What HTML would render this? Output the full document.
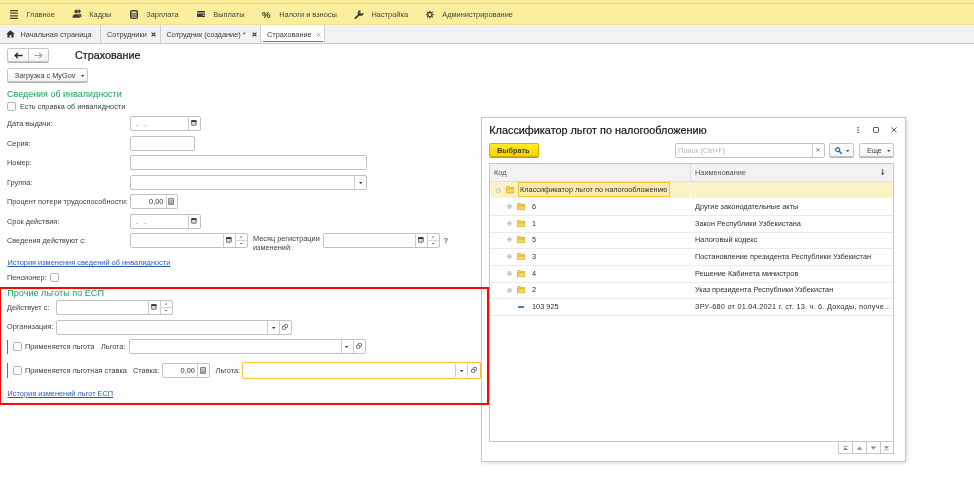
<!DOCTYPE html>
<html><head><meta charset="utf-8">
<style>
*{box-sizing:border-box;margin:0;padding:0}
html,body{width:974px;height:503px;overflow:hidden;background:#fff}
body{font-family:"Liberation Sans",sans-serif;font-size:7.35px;color:#404040;position:relative}
#r{position:absolute;left:0;top:0;width:974px;height:503px;overflow:hidden;background:#fff;filter:blur(.32px)}
.a{position:absolute;white-space:nowrap;line-height:10px}
.top0{left:-6px;top:-6px;width:990px;height:10px;background:#fbec9c;border-bottom:1px solid #e4d57e}
.top{left:-6px;top:4px;width:990px;height:21px;background:#fbed9e;border-bottom:1px solid #efe092}
.tabs{left:-6px;top:25px;width:990px;height:19px;background:#f2f2f2;border-bottom:1px solid #c8c8c8}
.mi{top:10px;color:#48453a;font-size:7.43px}
.tab{top:29.5px;color:#3a3a3a}
.sep{top:25px;width:1px;height:18px;background:#d0d0d0}
.inp{border:1px solid #c2c2c2;border-radius:2px;background:#fff;height:15px}
.vs{width:1px;background:#cdcdcd}
.btn{border:1px solid #c6c6c6;border-radius:2px;background:linear-gradient(#fff,#f3f3f3);box-shadow:0 1px 0 #b4b4b4}
.cb{width:9px;height:9px;border:1px solid #b8b8b8;border-radius:2px;background:#fff}
.g{color:#1aa355;font-size:8.97px}
.lnk{color:#2a5db0;text-decoration:underline}
.rl{left:490px;width:404px;height:1px;background:#ececec}
</style></head><body><div id="r">
<div class="a top0" style=""></div>
<div class="a top" style=""></div>
<div class="a tabs" style=""></div>
<div class="a mi" style="left:26.5px;top:10px;">Главное</div>
<div class="a mi" style="left:89.2px;top:10px;">Кадры</div>
<div class="a mi" style="left:146.2px;top:10px;">Зарплата</div>
<div class="a mi" style="left:213.2px;top:10px;">Выплаты</div>
<div class="a mi" style="left:279.2px;top:10px;">Налоги и взносы</div>
<div class="a mi" style="left:371.5px;top:10px;">Настройка</div>
<div class="a mi" style="left:442.2px;top:10px;">Администрирование</div>
<svg class="a" style="left:10px;top:10px" width="8" height="9" viewBox="0 0 8 9"><path d="M0 .6h8M0 3.2h8M0 5.8h8M0 8.4h8" stroke="#4a463a" stroke-width="1.3"/></svg>
<svg class="a" style="left:71.8px;top:9.3px" width="10" height="9.2" viewBox="0 0 10 9.2"><circle cx="7" cy="2.2" r="1.7" fill="#3c3a34"/><path d="M6.6 4.6c2 0 2.9 1 2.9 3.3H6.8z" fill="#3c3a34"/><circle cx="4.3" cy="2.6" r="2.05" fill="#3c3a34" stroke="#fbed9e" stroke-width=".5"/><path d="M.2 8.9c0-2.7 1.5-4 4.1-4s4.1 1.3 4.1 4z" fill="#3c3a34" stroke="#fbed9e" stroke-width=".4"/></svg>
<svg class="a" style="left:130px;top:10px" width="8" height="9" viewBox="0 0 8 9"><rect x=".5" y=".5" width="7" height="8" rx="1" fill="#6d6a5a" stroke="#46433a"/><rect x="1.7" y="1.6" width="4.6" height="1.5" fill="#e9dd98"/><path d="M1.7 4.4h4.6M1.7 6h4.6M1.7 7.5h4.6" stroke="#d9cf90" stroke-width=".8" stroke-dasharray="1.1 .65"/></svg>
<svg class="a" style="left:196.5px;top:11px" width="8.6" height="6.4" viewBox="0 0 8.6 6.4"><rect x="0" y="0" width="8.6" height="6.2" rx=".8" fill="#3e3c36"/><rect x="0" y="1.4" width="8.6" height="1.2" fill="#d5ca8c"/><rect x="5.6" y="3.9" width="2.1" height="1.1" fill="#d5ca8c"/></svg>
<div class="a " style="left:262px;top:9px;font-size:9.6px;line-height:11px;color:#3e3c36;text-shadow:0 0 .4px #3e3c36">%</div>
<svg class="a" style="left:354px;top:9.8px" width="10" height="9.4" viewBox="0 0 10 9.4"><path d="M1.4 8.2L5.3 4.3" stroke="#3e3c36" stroke-width="1.8" stroke-linecap="round"/><path d="M8.75 3.1A2.15 2.15 0 1 1 6.4 .75" stroke="#3e3c36" stroke-width="1.6" fill="none"/><circle cx="6" cy="3.6" r="1.1" fill="#3e3c36"/></svg>
<svg class="a" style="left:425px;top:10px" width="10" height="9" viewBox="0 0 10 9"><g transform="translate(4.9 4.6)" stroke="#3e3c36" fill="none"><circle r="2.1" stroke-width="1.3"/><path d="M0-3.9V-2.6M0 3.9V2.6M-3.9 0H-2.6M3.9 0H2.6M-2.76-2.76L-1.84-1.84M2.76 2.76L1.84 1.84M-2.76 2.76L-1.84 1.84M2.76-2.76L1.84-1.84" stroke-width="1.3"/></g></svg>
<div class="a " style="left:261px;top:25px;width:63px;height:18px;background:#fff"></div>
<div class="a " style="left:262.5px;top:41px;width:60px;height:1px;background:#1aa355"></div>
<div class="a tab" style="left:20.5px;top:29.5px;">Начальная страница</div>
<div class="a sep" style="left:100px"></div>
<div class="a tab" style="left:107px;top:29.5px;">Сотрудники</div>
<div class="a sep" style="left:160px"></div>
<div class="a tab" style="left:166.5px;top:29.5px;">Сотрудник (создание) *</div>
<div class="a sep" style="left:260px"></div>
<div class="a tab" style="left:267px;top:29.5px;">Страхование</div>
<div class="a sep" style="left:324px"></div>
<svg class="a" style="left:6px;top:30px" width="9" height="8" viewBox="0 0 9 8"><path d="M4.5 .3L.2 4.1h1.2v3.3h2.3V5h1.6v2.4h2.3V4.1h1.2z" fill="#333"/></svg>
<svg class="a" style="left:151.2px;top:32px" width="5" height="5" viewBox="0 0 5 5"><path d="M.6 .6L4.4 4.4M4.4 .6L.6 4.4" stroke="#333" stroke-width="1.15"/></svg>
<svg class="a" style="left:251.6px;top:32px" width="5" height="5" viewBox="0 0 5 5"><path d="M.6 .6L4.4 4.4M4.4 .6L.6 4.4" stroke="#333" stroke-width="1.15"/></svg>
<svg class="a" style="left:315.6px;top:32px" width="5" height="5" viewBox="0 0 5 5"><path d="M.6 .6L4.4 4.4M4.4 .6L.6 4.4" stroke="#999" stroke-width="0.8"/></svg>
<div class="a btn" style="left:7px;top:48px;width:42px;height:13.5px;"></div>
<div class="a vs" style="left:28px;top:49px;width:1px;height:12px;"></div>
<svg class="a" style="left:14px;top:52px" width="9" height="7" viewBox="0 0 9 7"><path d="M8.6 3.5H1.4M3.9 .8L1.1 3.5 3.9 6.2" stroke="#2e2e2e" stroke-width="1.3" fill="none"/></svg>
<svg class="a" style="left:33.5px;top:52px" width="9" height="7" viewBox="0 0 9 7"><path d="M.4 3.5H7.6M5.1 .8L7.9 3.5 5.1 6.2" stroke="#a4a4a4" stroke-width="1.1" fill="none"/></svg>
<div class="a " style="left:75px;top:49px;font-size:10.75px;line-height:13px;color:#151515;-webkit-text-stroke:.2px #151515">Страхование</div>
<div class="a btn" style="left:7px;top:68px;width:81px;height:14px;"></div>
<div class="a " style="left:14.8px;top:71px;">Загрузка с MyGov</div>
<svg class="a" style="left:80.6px;top:75.2px" width="3.4" height="2" viewBox="0 0 3.4 2"><path d="M0 0h3.4L1.7 2z" fill="#444"/></svg>
<div class="a g" style="left:7px;top:89px;">Сведения об инвалидности</div>
<div class="a cb" style="left:7px;top:102px;width:9px;height:9px;"></div>
<div class="a " style="left:20px;top:101.6px;">Есть справка об инвалидности</div>
<div class="a " style="left:7px;top:119px;">Дата выдачи:</div>
<div class="a inp" style="left:130px;top:116px;width:71px;height:15px;"></div>
<div class="a vs" style="left:188px;top:117px;width:1px;height:13px;"></div>
<svg class="a" style="left:191.4px;top:120px" width="5.7" height="5.6" viewBox="0 0 6 6"><rect x=".4" y=".6" width="5.2" height="5" rx=".7" fill="#d8d8d8" stroke="#444" stroke-width=".8"/><rect x=".2" y=".3" width="5.6" height="1.9" rx=".5" fill="#333"/></svg>
<div class="a " style="left:136px;top:119px;color:#505050">.&nbsp;&nbsp;&nbsp;.</div>
<div class="a " style="left:7px;top:138.5px;">Серия:</div>
<div class="a inp" style="left:130px;top:136px;width:65px;height:15px;"></div>
<div class="a " style="left:7px;top:158px;">Номер:</div>
<div class="a inp" style="left:130px;top:155px;width:237px;height:15px;"></div>
<div class="a " style="left:7px;top:177.5px;">Группа:</div>
<div class="a inp" style="left:130px;top:175px;width:237px;height:15px;"></div>
<div class="a vs" style="left:354.3px;top:176px;width:1px;height:13px;"></div>
<svg class="a" style="left:359px;top:181.8px" width="3.4" height="2" viewBox="0 0 3.4 2"><path d="M0 0h3.4L1.7 2z" fill="#333"/></svg>
<div class="a " style="left:7px;top:197px;">Процент потери трудоспособности:</div>
<div class="a inp" style="left:130px;top:194px;width:48px;height:15px;"></div>
<div class="a vs" style="left:165.5px;top:195px;width:1px;height:13px;"></div>
<svg class="a" style="left:168.2px;top:198px" width="6" height="7" viewBox="0 0 6 7"><rect x=".4" y=".4" width="5.2" height="6.2" rx=".8" fill="#9a9a9a" stroke="#6a6a6a" stroke-width=".8"/><rect x="1.3" y="1.3" width="3.4" height="1.2" fill="#e4e4e4"/><path d="M1.3 3.6h3.4M1.3 4.9h3.4" stroke="#d6d6d6" stroke-width=".7" stroke-dasharray=".9 .35"/></svg>
<div class="a " style="left:130px;top:197px;width:33.4px;text-align:right;color:#333">0,00</div>
<div class="a " style="left:7px;top:216.5px;">Срок действия:</div>
<div class="a inp" style="left:130px;top:214px;width:71px;height:15px;"></div>
<div class="a vs" style="left:188px;top:215px;width:1px;height:13px;"></div>
<svg class="a" style="left:191.4px;top:218px" width="5.7" height="5.6" viewBox="0 0 6 6"><rect x=".4" y=".6" width="5.2" height="5" rx=".7" fill="#d8d8d8" stroke="#444" stroke-width=".8"/><rect x=".2" y=".3" width="5.6" height="1.9" rx=".5" fill="#333"/></svg>
<div class="a " style="left:136px;top:217px;color:#505050">.&nbsp;&nbsp;&nbsp;.</div>
<div class="a " style="left:7px;top:236px;">Сведения действуют с:</div>
<div class="a inp" style="left:130px;top:233px;width:118px;height:15px;"></div>
<div class="a vs" style="left:223px;top:234px;width:1px;height:13px;"></div>
<div class="a vs" style="left:235.3px;top:234px;width:1px;height:13px;"></div>
<svg class="a" style="left:226.2px;top:237.2px" width="5.7" height="5.6" viewBox="0 0 6 6"><rect x=".4" y=".6" width="5.2" height="5" rx=".7" fill="#d8d8d8" stroke="#444" stroke-width=".8"/><rect x=".2" y=".3" width="5.6" height="1.9" rx=".5" fill="#333"/></svg>
<div class="a vs" style="left:235.3px;top:240px;width:12px;height:1px;background:#d6d6d6"></div>
<svg class="a" style="left:239.9px;top:236.2px" width="2.4" height="1.6" viewBox="0 0 2.4 1.6"><path d="M0 1.6h2.4L1.2 0z" fill="#555"/></svg>
<svg class="a" style="left:239.9px;top:242.8px" width="2.4" height="1.6" viewBox="0 0 2.4 1.6"><path d="M0 0h2.4L1.2 1.6z" fill="#555"/></svg>
<div class="a " style="left:253px;top:235px;line-height:8.9px">Месяц регистрации<br>изменений:</div>
<div class="a inp" style="left:323px;top:233px;width:117px;height:15px;"></div>
<div class="a vs" style="left:415px;top:234px;width:1px;height:13px;"></div>
<div class="a vs" style="left:427.3px;top:234px;width:1px;height:13px;"></div>
<svg class="a" style="left:418.2px;top:237.2px" width="5.7" height="5.6" viewBox="0 0 6 6"><rect x=".4" y=".6" width="5.2" height="5" rx=".7" fill="#d8d8d8" stroke="#444" stroke-width=".8"/><rect x=".2" y=".3" width="5.6" height="1.9" rx=".5" fill="#333"/></svg>
<div class="a vs" style="left:427.3px;top:240px;width:12px;height:1px;background:#d6d6d6"></div>
<svg class="a" style="left:431.9px;top:236.2px" width="2.4" height="1.6" viewBox="0 0 2.4 1.6"><path d="M0 1.6h2.4L1.2 0z" fill="#555"/></svg>
<svg class="a" style="left:431.9px;top:242.8px" width="2.4" height="1.6" viewBox="0 0 2.4 1.6"><path d="M0 0h2.4L1.2 1.6z" fill="#555"/></svg>
<div class="a " style="left:443.5px;top:235.5px;color:#2a7ac8;font-weight:bold;font-size:8px">?</div>
<div class="a lnk" style="left:7.4px;top:258.2px;font-size:7.4px">История изменения сведений об инвалидности</div>
<div class="a " style="left:7px;top:272.9px;">Пенсионер:</div>
<div class="a cb" style="left:50px;top:273px;width:9px;height:9px;"></div>
<div class="a g" style="left:7.3px;top:288.2px;font-size:9.08px">Прочие льготы по ЕСП</div>
<div class="a " style="left:7px;top:302.5px;">Действует с:</div>
<div class="a inp" style="left:56px;top:300px;width:117px;height:15px;"></div>
<div class="a vs" style="left:148px;top:301px;width:1px;height:13px;"></div>
<div class="a vs" style="left:160.3px;top:301px;width:1px;height:13px;"></div>
<svg class="a" style="left:151.2px;top:304.2px" width="5.7" height="5.6" viewBox="0 0 6 6"><rect x=".4" y=".6" width="5.2" height="5" rx=".7" fill="#d8d8d8" stroke="#444" stroke-width=".8"/><rect x=".2" y=".3" width="5.6" height="1.9" rx=".5" fill="#333"/></svg>
<div class="a vs" style="left:160.3px;top:307px;width:12px;height:1px;background:#d6d6d6"></div>
<svg class="a" style="left:164.9px;top:303.2px" width="2.4" height="1.6" viewBox="0 0 2.4 1.6"><path d="M0 1.6h2.4L1.2 0z" fill="#555"/></svg>
<svg class="a" style="left:164.9px;top:309.8px" width="2.4" height="1.6" viewBox="0 0 2.4 1.6"><path d="M0 0h2.4L1.2 1.6z" fill="#555"/></svg>
<div class="a " style="left:7px;top:322px;">Организация:</div>
<div class="a inp" style="left:56px;top:320px;width:236px;height:15px;"></div>
<div class="a vs" style="left:267px;top:321px;width:1px;height:13px;"></div>
<div class="a vs" style="left:279.3px;top:321px;width:1px;height:13px;"></div>
<svg class="a" style="left:271.7px;top:326.8px" width="3.4" height="2" viewBox="0 0 3.4 2"><path d="M0 0h3.4L1.7 2z" fill="#333"/></svg>
<svg class="a" style="left:282.4px;top:324.3px" width="6" height="6" viewBox="0 0 6 6"><rect x="2.2" y=".5" width="3.3" height="3" rx=".6" fill="#fff" stroke="#555" stroke-width=".8"/><rect x=".5" y="2.3" width="3.3" height="3" rx=".6" fill="#fff" stroke="#555" stroke-width=".8"/></svg>
<div class="a " style="left:7px;top:340px;width:1px;height:14px;background:#1aa355"></div>
<div class="a cb" style="left:13px;top:342px;width:9px;height:9px;"></div>
<div class="a " style="left:25px;top:341.5px;">Применяется льгота</div>
<div class="a " style="left:101px;top:341.5px;">Льгота:</div>
<div class="a inp" style="left:129px;top:339px;width:236.5px;height:15px;"></div>
<div class="a vs" style="left:340.5px;top:340px;width:1px;height:13px;"></div>
<div class="a vs" style="left:352.8px;top:340px;width:1px;height:13px;"></div>
<svg class="a" style="left:345.2px;top:345.8px" width="3.4" height="2" viewBox="0 0 3.4 2"><path d="M0 0h3.4L1.7 2z" fill="#333"/></svg>
<svg class="a" style="left:355.9px;top:343.3px" width="6" height="6" viewBox="0 0 6 6"><rect x="2.2" y=".5" width="3.3" height="3" rx=".6" fill="#fff" stroke="#555" stroke-width=".8"/><rect x=".5" y="2.3" width="3.3" height="3" rx=".6" fill="#fff" stroke="#555" stroke-width=".8"/></svg>
<div class="a " style="left:7px;top:363px;width:1px;height:15px;background:#1aa355"></div>
<div class="a cb" style="left:13px;top:366px;width:9px;height:9px;"></div>
<div class="a " style="left:25px;top:365.5px;">Применяется льготная ставка</div>
<div class="a " style="left:133px;top:365.5px;">Ставка:</div>
<div class="a inp" style="left:162px;top:363px;width:47.5px;height:15px;"></div>
<div class="a vs" style="left:197px;top:364px;width:1px;height:13px;"></div>
<svg class="a" style="left:199.7px;top:367px" width="6" height="7" viewBox="0 0 6 7"><rect x=".4" y=".4" width="5.2" height="6.2" rx=".8" fill="#9a9a9a" stroke="#6a6a6a" stroke-width=".8"/><rect x="1.3" y="1.3" width="3.4" height="1.2" fill="#e4e4e4"/><path d="M1.3 3.6h3.4M1.3 4.9h3.4" stroke="#d6d6d6" stroke-width=".7" stroke-dasharray=".9 .35"/></svg>
<div class="a " style="left:162px;top:366px;width:32.9px;text-align:right;color:#333">0,00</div>
<div class="a " style="left:215.6px;top:365.5px;">Льгота:</div>
<div class="a inp" style="left:242px;top:362px;width:239px;height:17px;border-color:#f5c540"></div>
<div class="a vs" style="left:454.5px;top:364px;width:1px;height:13px;"></div>
<div class="a vs" style="left:467.1px;top:364px;width:1px;height:13px;"></div>
<svg class="a" style="left:459.5px;top:369.8px" width="3.4" height="2" viewBox="0 0 3.4 2"><path d="M0 0h3.4L1.7 2z" fill="#333"/></svg>
<svg class="a" style="left:470.8px;top:367.3px" width="6" height="6" viewBox="0 0 6 6"><rect x="2.2" y=".5" width="3.3" height="3" rx=".6" fill="#fff" stroke="#555" stroke-width=".8"/><rect x=".5" y="2.3" width="3.3" height="3" rx=".6" fill="#fff" stroke="#555" stroke-width=".8"/></svg>
<div class="a lnk" style="left:7.5px;top:389px;font-size:7.4px">История изменений льгот ЕСП</div>
<div class="a " style="left:481px;top:117px;width:425px;height:345px;background:#fff;border:1px solid #c8c8c8;box-shadow:1px 1px 4px rgba(0,0,0,.16)"></div>
<div class="a " style="left:489.3px;top:123.8px;font-size:10.85px;line-height:13px;color:#151515;-webkit-text-stroke:.2px #151515">Классификатор льгот по налогообложению</div>
<svg class="a" style="left:857px;top:126.5px" width="2.4" height="6.4" viewBox="0 0 2.4 6.4"><rect x=".5" y="0" width="1.3" height="1.3" fill="#444"/><rect x=".5" y="2.5" width="1.3" height="1.3" fill="#444"/><rect x=".5" y="5" width="1.3" height="1.3" fill="#444"/></svg>
<svg class="a" style="left:873px;top:127px" width="6" height="6" viewBox="0 0 6 6"><rect x=".5" y=".5" width="5" height="4.8" rx=".6" fill="none" stroke="#444" stroke-width=".9"/></svg>
<svg class="a" style="left:890.5px;top:127px" width="6" height="6" viewBox="0 0 6 6"><path d="M.4 .4L5.6 5.4M5.6 .4L.4 5.4" stroke="#444" stroke-width=".9"/></svg>
<div class="a " style="left:489px;top:143px;width:50px;height:14px;border:1px solid #d4b200;border-radius:2px;background:linear-gradient(#ffea2e,#f7d200);box-shadow:0 1px 0 #b89c00"></div>
<div class="a " style="left:497px;top:146px;font-weight:bold;color:#4a4000;font-size:7.3px">Выбрать</div>
<div class="a inp" style="left:675px;top:143px;width:150px;height:15px;"></div>
<div class="a vs" style="left:812px;top:144px;width:1px;height:13px;"></div>
<svg class="a" style="left:815.8px;top:148.2px" width="3.8" height="3.8" viewBox="0 0 3.8 3.8"><path d="M.3 .3L3.5 3.5M3.5 .3L.3 3.5" stroke="#666" stroke-width=".8"/></svg>
<div class="a " style="left:678px;top:146px;color:#b4b4b4">Поиск (Ctrl+F)</div>
<div class="a btn" style="left:829px;top:143px;width:25px;height:14px;"></div>
<svg class="a" style="left:835px;top:147px" width="7" height="7" viewBox="0 0 7 7"><circle cx="2.7" cy="2.7" r="2" fill="none" stroke="#2a6fb5" stroke-width="1.2"/><path d="M4.2 4.2L6.4 6.4" stroke="#2a6fb5" stroke-width="1.5" stroke-linecap="round"/></svg>
<svg class="a" style="left:846.4px;top:150.2px" width="3.4" height="2" viewBox="0 0 3.4 2"><path d="M0 0h3.4L1.7 2z" fill="#444"/></svg>
<div class="a btn" style="left:859px;top:143px;width:35px;height:14px;"></div>
<div class="a " style="left:867px;top:146px;">Еще</div>
<svg class="a" style="left:886.8px;top:150.2px" width="3.4" height="2" viewBox="0 0 3.4 2"><path d="M0 0h3.4L1.7 2z" fill="#444"/></svg>
<div class="a " style="left:489px;top:163px;width:405px;height:279px;border:1px solid #c6c6c6"></div>
<div class="a " style="left:490px;top:164px;width:403px;height:17.5px;background:#f2f2f2;border-bottom:1px solid #dedede"></div>
<div class="a " style="left:690px;top:164px;width:1px;height:17px;background:#dcdcdc"></div>
<div class="a " style="left:494px;top:168px;color:#555">Код</div>
<div class="a " style="left:695px;top:168px;color:#555">Наименование</div>
<svg class="a" style="left:881.2px;top:169px" width="3.4" height="6" viewBox="0 0 3.4 6"><path d="M1.7 0V5.4M.2 3.8L1.7 5.6 3.2 3.8" stroke="#333" stroke-width=".8" fill="none"/></svg>
<div class="a " style="left:490px;top:181.5px;width:403px;height:16px;background:#fdf2c6"></div>
<div class="a " style="left:690px;top:181.5px;width:1px;height:16px;background:#fffaf0"></div>
<div class="a " style="left:518px;top:182px;width:152px;height:15px;border:1px solid #f8c630;background:#fdebac"></div>
<div class="a " style="left:520px;top:185px;color:#2e2e2e">Классификатор льгот по налогообложению</div>
<svg class="a" style="left:496px;top:187.5px" width="5" height="5" viewBox="0 0 5 5"><circle cx="2.5" cy="2.5" r="2.1" fill="#fff" stroke="#a8a8a8" stroke-width=".6"/><path d="M1.3 2.5h2.4" stroke="#888" stroke-width=".6"/></svg>
<svg class="a" style="left:505.6px;top:186.4px" width="8.4" height="7.2" viewBox="0 0 8.4 7.2"><path d="M.4 1.4c0-.5.3-.9.8-.9h2.2l.9 1h3c.4 0 .7.3.7.8v3.9c0 .4-.3.7-.7.7H1.1c-.4 0-.7-.3-.7-.7z" fill="#f8d66a" stroke="#e3a62c" stroke-width=".9"/><path d="M.6 2.9h7.2" stroke="#e3a62c" stroke-width=".8"/></svg>
<div class="a " style="left:490px;top:215px;width:403px;height:1px;background:#ebebeb"></div>
<div class="a " style="left:532px;top:201.9px;color:#2e2e2e">6</div>
<div class="a " style="left:695px;top:201.9px;color:#2e2e2e">Другие законодательные акты</div>
<svg class="a" style="left:507.2px;top:204px" width="5" height="5" viewBox="0 0 5 5"><circle cx="2.5" cy="2.5" r="2.1" fill="#fff" stroke="#a8a8a8" stroke-width=".6"/><path d="M1.3 2.5h2.4M2.5 1.3v2.4" stroke="#888" stroke-width=".6"/></svg>
<svg class="a" style="left:516.6px;top:202.8px" width="8.4" height="7.2" viewBox="0 0 8.4 7.2"><path d="M.4 1.4c0-.5.3-.9.8-.9h2.2l.9 1h3c.4 0 .7.3.7.8v3.9c0 .4-.3.7-.7.7H1.1c-.4 0-.7-.3-.7-.7z" fill="#f8d66a" stroke="#e3a62c" stroke-width=".9"/><path d="M.6 2.9h7.2" stroke="#e3a62c" stroke-width=".8"/></svg>
<div class="a " style="left:490px;top:232px;width:403px;height:1px;background:#ebebeb"></div>
<div class="a " style="left:532px;top:218.6px;color:#2e2e2e">1</div>
<div class="a " style="left:695px;top:218.6px;color:#2e2e2e">Закон Республики Узбекистана</div>
<svg class="a" style="left:507.2px;top:220.7px" width="5" height="5" viewBox="0 0 5 5"><circle cx="2.5" cy="2.5" r="2.1" fill="#fff" stroke="#a8a8a8" stroke-width=".6"/><path d="M1.3 2.5h2.4M2.5 1.3v2.4" stroke="#888" stroke-width=".6"/></svg>
<svg class="a" style="left:516.6px;top:219.5px" width="8.4" height="7.2" viewBox="0 0 8.4 7.2"><path d="M.4 1.4c0-.5.3-.9.8-.9h2.2l.9 1h3c.4 0 .7.3.7.8v3.9c0 .4-.3.7-.7.7H1.1c-.4 0-.7-.3-.7-.7z" fill="#f8d66a" stroke="#e3a62c" stroke-width=".9"/><path d="M.6 2.9h7.2" stroke="#e3a62c" stroke-width=".8"/></svg>
<div class="a " style="left:490px;top:248px;width:403px;height:1px;background:#ebebeb"></div>
<div class="a " style="left:532px;top:235.3px;color:#2e2e2e">5</div>
<div class="a " style="left:695px;top:235.3px;color:#2e2e2e">Налоговый кодекс</div>
<svg class="a" style="left:507.2px;top:237.4px" width="5" height="5" viewBox="0 0 5 5"><circle cx="2.5" cy="2.5" r="2.1" fill="#fff" stroke="#a8a8a8" stroke-width=".6"/><path d="M1.3 2.5h2.4M2.5 1.3v2.4" stroke="#888" stroke-width=".6"/></svg>
<svg class="a" style="left:516.6px;top:236.2px" width="8.4" height="7.2" viewBox="0 0 8.4 7.2"><path d="M.4 1.4c0-.5.3-.9.8-.9h2.2l.9 1h3c.4 0 .7.3.7.8v3.9c0 .4-.3.7-.7.7H1.1c-.4 0-.7-.3-.7-.7z" fill="#f8d66a" stroke="#e3a62c" stroke-width=".9"/><path d="M.6 2.9h7.2" stroke="#e3a62c" stroke-width=".8"/></svg>
<div class="a " style="left:490px;top:265px;width:403px;height:1px;background:#ebebeb"></div>
<div class="a " style="left:532px;top:252px;color:#2e2e2e">3</div>
<div class="a " style="left:695px;top:252px;color:#2e2e2e">Постановление президента Республики Узбекистан</div>
<svg class="a" style="left:507.2px;top:254.1px" width="5" height="5" viewBox="0 0 5 5"><circle cx="2.5" cy="2.5" r="2.1" fill="#fff" stroke="#a8a8a8" stroke-width=".6"/><path d="M1.3 2.5h2.4M2.5 1.3v2.4" stroke="#888" stroke-width=".6"/></svg>
<svg class="a" style="left:516.6px;top:252.9px" width="8.4" height="7.2" viewBox="0 0 8.4 7.2"><path d="M.4 1.4c0-.5.3-.9.8-.9h2.2l.9 1h3c.4 0 .7.3.7.8v3.9c0 .4-.3.7-.7.7H1.1c-.4 0-.7-.3-.7-.7z" fill="#f8d66a" stroke="#e3a62c" stroke-width=".9"/><path d="M.6 2.9h7.2" stroke="#e3a62c" stroke-width=".8"/></svg>
<div class="a " style="left:490px;top:282px;width:403px;height:1px;background:#ebebeb"></div>
<div class="a " style="left:532px;top:268.7px;color:#2e2e2e">4</div>
<div class="a " style="left:695px;top:268.7px;color:#2e2e2e">Решение Кабинета министров</div>
<svg class="a" style="left:507.2px;top:270.8px" width="5" height="5" viewBox="0 0 5 5"><circle cx="2.5" cy="2.5" r="2.1" fill="#fff" stroke="#a8a8a8" stroke-width=".6"/><path d="M1.3 2.5h2.4M2.5 1.3v2.4" stroke="#888" stroke-width=".6"/></svg>
<svg class="a" style="left:516.6px;top:269.6px" width="8.4" height="7.2" viewBox="0 0 8.4 7.2"><path d="M.4 1.4c0-.5.3-.9.8-.9h2.2l.9 1h3c.4 0 .7.3.7.8v3.9c0 .4-.3.7-.7.7H1.1c-.4 0-.7-.3-.7-.7z" fill="#f8d66a" stroke="#e3a62c" stroke-width=".9"/><path d="M.6 2.9h7.2" stroke="#e3a62c" stroke-width=".8"/></svg>
<div class="a " style="left:490px;top:298px;width:403px;height:1px;background:#ebebeb"></div>
<div class="a " style="left:532px;top:285.4px;color:#2e2e2e">2</div>
<div class="a " style="left:695px;top:285.4px;color:#2e2e2e">Указ президента Республики Узбекистан</div>
<svg class="a" style="left:507.2px;top:287.5px" width="5" height="5" viewBox="0 0 5 5"><circle cx="2.5" cy="2.5" r="2.1" fill="#fff" stroke="#a8a8a8" stroke-width=".6"/><path d="M1.3 2.5h2.4M2.5 1.3v2.4" stroke="#888" stroke-width=".6"/></svg>
<svg class="a" style="left:516.6px;top:286.3px" width="8.4" height="7.2" viewBox="0 0 8.4 7.2"><path d="M.4 1.4c0-.5.3-.9.8-.9h2.2l.9 1h3c.4 0 .7.3.7.8v3.9c0 .4-.3.7-.7.7H1.1c-.4 0-.7-.3-.7-.7z" fill="#f8d66a" stroke="#e3a62c" stroke-width=".9"/><path d="M.6 2.9h7.2" stroke="#e3a62c" stroke-width=".8"/></svg>
<div class="a " style="left:490px;top:315px;width:403px;height:1px;background:#ebebeb"></div>
<div class="a " style="left:532px;top:302.1px;color:#2e2e2e">103 925</div>
<div class="a " style="left:695px;top:302.1px;color:#2e2e2e;letter-spacing:.225px">ЗРУ-680 от 01.04.2021 г. ст. 13. ч. 6. Доходы, получе...</div>
<div class="a " style="left:518.2px;top:305.5px;width:5.4px;height:2.2px;background:#3b78b8;border-radius:.8px"></div>
<div class="a " style="left:838px;top:441px;width:56px;height:13px;border:1px solid #c6c6c6;background:#fff"></div>
<div class="a " style="left:852px;top:442px;width:1px;height:11px;background:#c6c6c6"></div>
<div class="a " style="left:866px;top:442px;width:1px;height:11px;background:#c6c6c6"></div>
<div class="a " style="left:879.5px;top:442px;width:1px;height:11px;background:#c6c6c6"></div>
<svg class="a" style="left:842px;top:445px" width="7" height="6" viewBox="0 0 7 6"><path d="M.9 1.3h5.2" stroke="#8c8c8c" stroke-width=".7"/><path d="M.9 4.9h5.2L3.5 2.2z" fill="#8c8c8c"/></svg>
<svg class="a" style="left:856px;top:445px" width="7" height="6" viewBox="0 0 7 6"><path d="M.8 4.7h5.4L3.5 1.6z" fill="#8c8c8c"/></svg>
<svg class="a" style="left:869.5px;top:445px" width="7" height="6" viewBox="0 0 7 6"><path d="M.8 1.6h5.4L3.5 4.7z" fill="#8c8c8c"/></svg>
<svg class="a" style="left:883.4px;top:445px" width="7" height="6" viewBox="0 0 7 6"><path d="M.9 4.9h5.2" stroke="#8c8c8c" stroke-width=".7"/><path d="M.9 1.3h5.2L3.5 4z" fill="#8c8c8c"/></svg>
<div class="a " style="left:-1px;top:287px;width:490px;height:118px;border:2px solid #fb0505"></div>
</div></body></html>
